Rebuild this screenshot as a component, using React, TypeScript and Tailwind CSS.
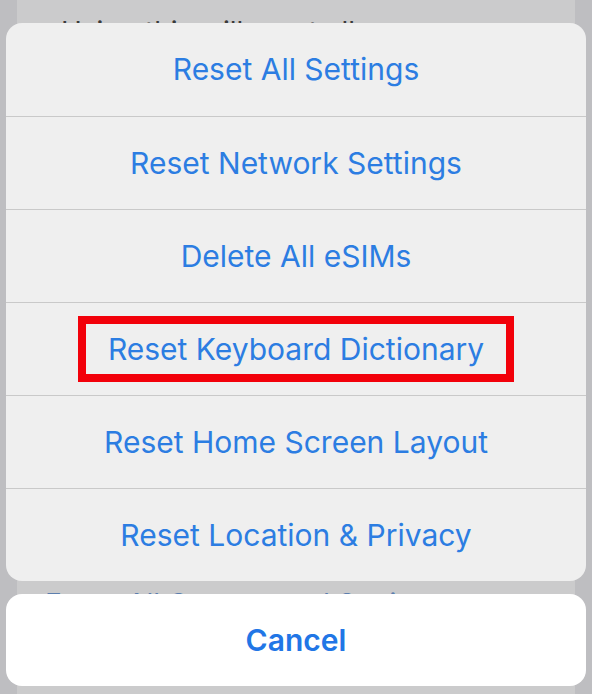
import React from 'react';

const actions = [
    'Reset All Settings',
    'Reset Network Settings',
    'Delete All eSIMs',
    'Reset Keyboard Dictionary',
    'Reset Home Screen Layout',
    'Reset Location & Privacy',
];

const App: React.FC = () => {
    return (
        <div
            className="relative w-[592px] h-[694px] overflow-hidden bg-[#bebec1]"
            style={{ fontFamily: 'Inter, "Noto Sans", sans-serif' }}
        >
            {/* dimmed settings page behind the sheet */}
            <div className="mx-[17px] h-full bg-[#cbcbcc] flex flex-col">
                <div className="mt-[15px] h-[34px] pl-[44px] text-[28px] leading-[34px] text-[#3a3a3a] whitespace-nowrap">
                    Using this will reset all
                </div>
                <div className="mt-[538px] h-[34px] pl-[28px] text-[28px] leading-[34px] text-[#5d7fae] whitespace-nowrap">
                    Erase All Content and Settings
                </div>
            </div>

            {/* action sheet */}
            <div className="absolute inset-0 flex flex-col px-[6px] pt-[23px] gap-[13px]">
                <div className="rounded-[16px] bg-[#efefef] overflow-hidden flex flex-col">
                    {actions.map((label, i) => (
                        <div
                            key={label}
                            className={`h-[93px] flex items-center justify-center ${i > 0 ? 'border-t border-[#c9c9c9]' : ''}`}
                        >
                            {label === 'Reset Keyboard Dictionary' ? (
                                <span className="w-[436px] h-[66px] border-[8px] border-[#f2000a] flex items-center justify-center text-[30px] text-[#2c7de2]">
                                    {label}
                                </span>
                            ) : (
                                <span className="text-[30px] text-[#2c7de2]">{label}</span>
                            )}
                        </div>
                    ))}
                </div>
                <div className="h-[92px] rounded-[16px] bg-white flex items-center justify-center">
                    <span className="text-[30px] font-semibold text-[#2176e6]">Cancel</span>
                </div>
            </div>
        </div>
    );
};

export default App;
